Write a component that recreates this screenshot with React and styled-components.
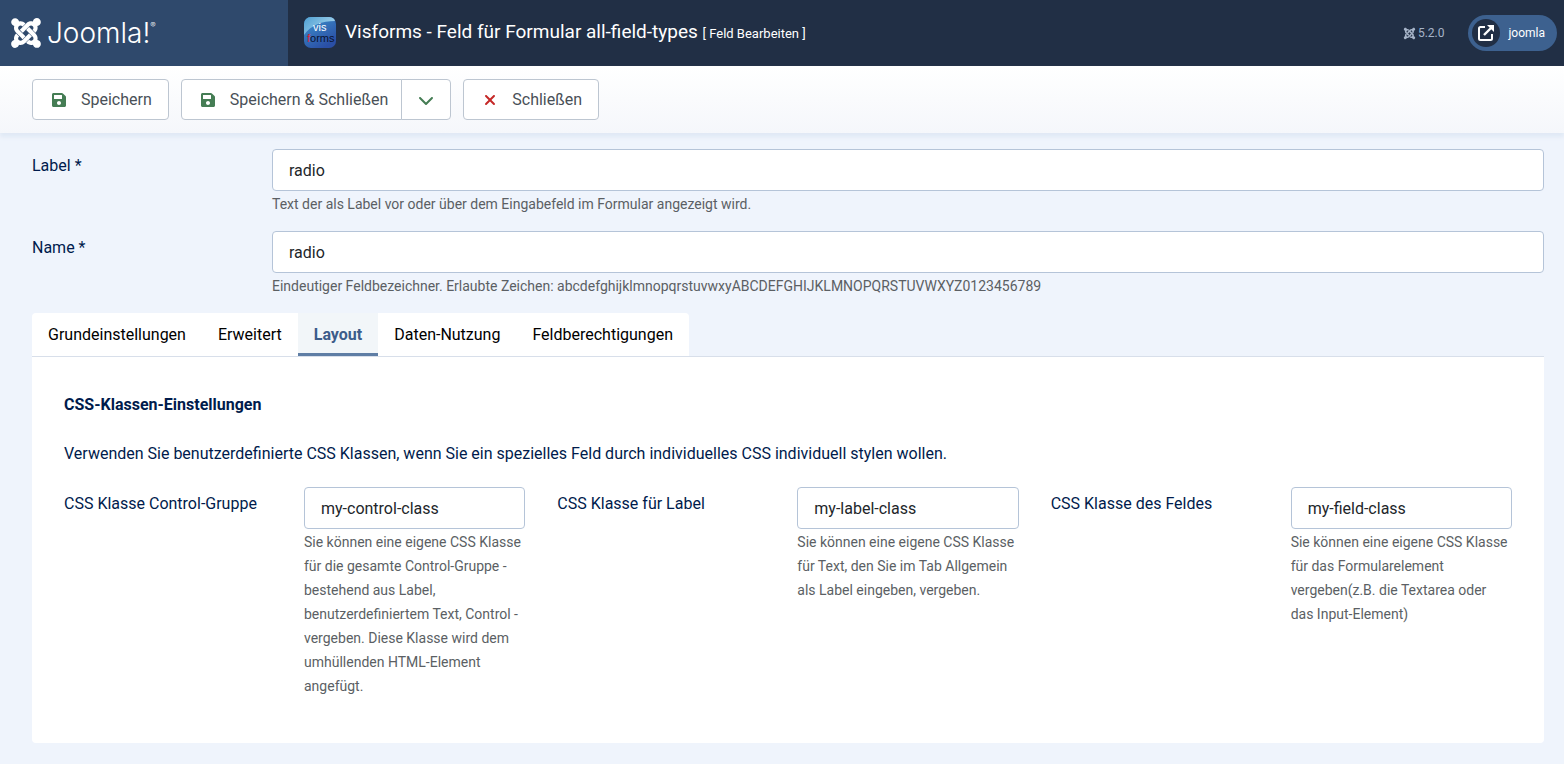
import React, { useState } from "react";
import styled, { createGlobalStyle } from "styled-components";
import { FaJoomla, FaSave } from "react-icons/fa";
import { FaChevronDown, FaXmark } from "react-icons/fa6";

const GlobalStyle = createGlobalStyle`
  *, *::before, *::after {
    box-sizing: border-box;
  }

  body {
    margin: 0;
    background: #eff4fc;
    color: #001b4c;
    font-family: Roboto, "Liberation Sans", sans-serif;
    font-size: 16px;
    line-height: 24px;
  }

  button, input {
    font: inherit;
  }
`;

const Header = styled.header`
  display: flex;
  height: 66px;
  background: #212f45;
  color: #ffffff;
`;

const Brand = styled.a`
  display: flex;
  flex: 0 0 288px;
  align-items: center;
  padding-left: 9px;
  gap: 4px;
  background: #2f496c;
  color: #ffffff;
  text-decoration: none;
`;

const Wordmark = styled.span`
  display: flex;
  font-family: Inter, sans-serif;
  font-size: 28px;
  font-weight: 300;
  line-height: 32px;

  sup {
    font-size: 8px;
    line-height: 16px;
  }
`;

const TitleArea = styled.div`
  display: flex;
  flex: 1;
  align-items: center;
  gap: 9px;
  padding-left: 16px;
`;

const Title = styled.h1`
  margin: 0;
  font-size: 19px;
  font-weight: 400;
  line-height: 24px;

  small {
    font-size: 13px;
  }
`;

const HeaderItems = styled.div`
  display: flex;
  align-items: center;
  gap: 24px;
  padding-right: 7px;
`;

const Version = styled.div`
  display: flex;
  align-items: center;
  gap: 2px;
  color: #a6b4c8;
  font-size: 12px;
`;

const SiteLink = styled.a`
  display: flex;
  align-items: center;
  gap: 8px;
  height: 36px;
  padding: 0 12px 0 4px;
  border-radius: 18px;
  background: #3d618f;
  color: #ffffff;
  font-size: 12px;
  text-decoration: none;
`;

const SiteIcon = styled.span`
  display: flex;
  align-items: center;
  justify-content: center;
  width: 28px;
  height: 28px;
  border-radius: 50%;
  background: #212f45;
`;

const Toolbar = styled.div`
  display: flex;
  gap: 12px;
  padding: 13px 32px;
  background: linear-gradient(#ffffff, #f5f7fb);
  box-shadow: 0 4px 4px #e0e9f5;
`;

const ButtonGroup = styled.div`
  display: flex;

  button:first-child {
    border-radius: 4px 0 0 4px;
  }

  button:last-child {
    margin-left: -1px;
    border-radius: 0 4px 4px 0;
  }
`;

const ToolButton = styled.button`
  display: flex;
  align-items: center;
  gap: 14px;
  height: 41px;
  padding: 0 ${({ $tight }) => ($tight ? "13px" : "16px")} 0 18px;
  border: 1px solid #bdc6d1;
  border-radius: 4px;
  background: #ffffff;
  color: #495057;
  cursor: pointer;

  svg {
    color: ${({ $danger }) => ($danger ? "#c52827" : "#457d54")};
  }
`;

const ToggleButton = styled(ToolButton)`
  justify-content: center;
  width: 50px;
  padding: 0;
`;

const Main = styled.main`
  padding: 16px 20px 21px 32px;
`;

const FieldRow = styled.div`
  display: flex;
  margin-bottom: ${({ $flush }) => ($flush ? "0" : "15px")};
`;

const FieldLabel = styled.label`
  flex: 0 0 240px;
  padding-top: 5px;
`;

const FieldBody = styled.div`
  flex: 1;
  min-width: 0;
`;

const TextInput = styled.input`
  display: block;
  width: 100%;
  height: 42px;
  padding: 0 16px;
  border: 1px solid #b5c4d8;
  border-radius: 4px;
  background: #ffffff;
  color: #22262a;
  outline: none;
`;

const Hint = styled.div`
  padding-top: 1px;
  color: #5b5f64;
  font-size: 14px;
`;

const TabList = styled.div`
  display: inline-flex;
  vertical-align: top;
  border-radius: 4px 4px 0 0;
  background: #ffffff;
  overflow: hidden;
`;

const Tab = styled.button`
  height: 43px;
  padding: 0 16px;
  border: 0;
  background: ${({ $active }) => ($active ? "#f2f6f9" : "transparent")};
  box-shadow: ${({ $active }) => ($active ? "inset 0 -3px #5f7ea5" : "none")};
  color: ${({ $active }) => ($active ? "#3c5c8a" : "#000000")};
  font-weight: ${({ $active }) => ($active ? 700 : 400)};
  cursor: pointer;
`;

const Panel = styled.section`
  min-height: 387px;
  padding: 36px 32px;
  border-top: 1px solid #d8dfea;
  border-radius: 0 0 4px 4px;
  background: #ffffff;
`;

const PanelTitle = styled.h2`
  margin: 0 0 25px;
  font-size: 16px;
  font-weight: 700;
  line-height: 24px;
`;

const PanelText = styled.p`
  margin: 0 0 21px;
`;

const Columns = styled.div`
  display: grid;
  grid-template-columns: repeat(3, 1fr);
  gap: 32px;
`;

const tabs = [
  "Grundeinstellungen",
  "Erweitert",
  "Layout",
  "Daten-Nutzung",
  "Feldberechtigungen",
];

const cssFields = [
  {
    id: "css-control",
    label: "CSS Klasse Control-Gruppe",
    value: "my-control-class",
    hint: "Sie können eine eigene CSS Klasse für die gesamte Control-Gruppe - bestehend aus Label, benutzerdefiniertem Text, Control - vergeben. Diese Klasse wird dem umhüllenden HTML-Element angefügt.",
  },
  {
    id: "css-label",
    label: "CSS Klasse für Label",
    value: "my-label-class",
    hint: "Sie können eine eigene CSS Klasse für Text, den Sie im Tab Allgemein als Label eingeben, vergeben.",
  },
  {
    id: "css-field",
    label: "CSS Klasse des Feldes",
    value: "my-field-class",
    hint: "Sie können eine eigene CSS Klasse für das Formularelement vergeben(z.B. die Textarea oder das Input-Element)",
  },
];

const VisformsIcon = () => (
  <svg width="32" height="32" viewBox="0 0 32 32" aria-hidden="true">
    <defs>
      <linearGradient id="vf-base" x1="0" y1="0" x2="0.6" y2="1">
        <stop offset="0" stopColor="#3f95cf" />
        <stop offset="1" stopColor="#2a4fa5" />
      </linearGradient>
      <linearGradient id="vf-shine" x1="0" y1="0" x2="1" y2="0.6">
        <stop offset="0" stopColor="#4f9fd2" />
        <stop offset="1" stopColor="#a9d7ef" />
      </linearGradient>
    </defs>
    <rect width="32" height="31" rx="7" fill="url(#vf-base)" />
    <path d="M0 18V7a7 7 0 0 1 7-7h18c3 0 5 1 6 4C18 4 7 8 0 18z" fill="url(#vf-shine)" />
    <g fontFamily="Liberation Sans, sans-serif" fontSize="11">
      <text x="9" y="14" fill="#ffffff">vis</text>
      <text x="3" y="25" fill="#0a1230">
        <tspan fill="#e0202c">f</tspan>orms
      </text>
    </g>
  </svg>
);

const ExternalIcon = () => (
  <svg width="18" height="18" viewBox="0 0 18 18" fill="none" aria-hidden="true">
    <path
      d="M8 3H3.5A1.5 1.5 0 0 0 2 4.500V14.500A1.500 1.500 0 0 0 3.500 16H13.500A1.500 1.500 0 0 0 15 14.500V10"
      stroke="#ffffff"
      strokeWidth="2"
    />
    <path d="M7 11l7-7" stroke="#ffffff" strokeWidth="2.400" />
    <path d="M10 1H17v7z" fill="#ffffff" />
  </svg>
);

const Field = ({ id, label, value, hint, flush }) => {
  const [text, setText] = useState(value);

  return (
    <FieldRow $flush={flush}>
      <FieldLabel htmlFor={id}>{label}</FieldLabel>
      <FieldBody>
        <TextInput
          id={id}
          type="text"
          value={text}
          aria-describedby={`${id}-hint`}
          onChange={(e) => setText(e.target.value)}
        />
        <Hint id={`${id}-hint`}>{hint}</Hint>
      </FieldBody>
    </FieldRow>
  );
};

const App = () => {
  const [active, setActive] = useState("Layout");

  return (
    <>
      <GlobalStyle />
      <Header>
        <Brand href="#" aria-label="Joomla!">
          <FaJoomla size={34} />
          <Wordmark>
            Joomla!<sup>®</sup>
          </Wordmark>
        </Brand>
        <TitleArea>
          <VisformsIcon />
          <Title>
            Visforms - Feld für Formular all-field-types{" "}
            <small>[ Feld Bearbeiten ]</small>
          </Title>
        </TitleArea>
        <HeaderItems>
          <Version>
            <FaJoomla size={13} />
            5.2.0
          </Version>
          <SiteLink href="#">
            <SiteIcon>
              <ExternalIcon />
            </SiteIcon>
            joomla
          </SiteLink>
        </HeaderItems>
      </Header>

      <Toolbar>
        <ToolButton type="button">
          <FaSave size={16} />
          Speichern
        </ToolButton>
        <ButtonGroup>
          <ToolButton type="button" $tight>
            <FaSave size={16} />
            Speichern &amp; Schließen
          </ToolButton>
          <ToggleButton type="button" aria-label="Weitere Optionen">
            <FaChevronDown size={16} />
          </ToggleButton>
        </ButtonGroup>
        <ToolButton type="button" $danger>
          <FaXmark size={16} />
          Schließen
        </ToolButton>
      </Toolbar>

      <Main>
        <Field
          id="label"
          label="Label *"
          value="radio"
          hint="Text der als Label vor oder über dem Eingabefeld im Formular angezeigt wird."
        />
        <Field
          id="name"
          label="Name *"
          value="radio"
          hint="Eindeutiger Feldbezeichner. Erlaubte Zeichen: abcdefghijklmnopqrstuvwxyABCDEFGHIJKLMNOPQRSTUVWXYZ0123456789"
        />

        <TabList role="tablist">
          {tabs.map((tab) => (
            <Tab
              key={tab}
              type="button"
              role="tab"
              aria-selected={tab === active}
              $active={tab === active}
              onClick={() => setActive(tab)}
            >
              {tab}
            </Tab>
          ))}
        </TabList>
        <Panel>
          <PanelTitle>CSS-Klassen-Einstellungen</PanelTitle>
          <PanelText>
            Verwenden Sie benutzerdefinierte CSS Klassen, wenn Sie ein spezielles
            Feld durch individuelles CSS individuell stylen wollen.
          </PanelText>
          <Columns>
            {cssFields.map((field) => (
              <Field key={field.id} {...field} flush />
            ))}
          </Columns>
        </Panel>
      </Main>
    </>
  );
};

export default App;
